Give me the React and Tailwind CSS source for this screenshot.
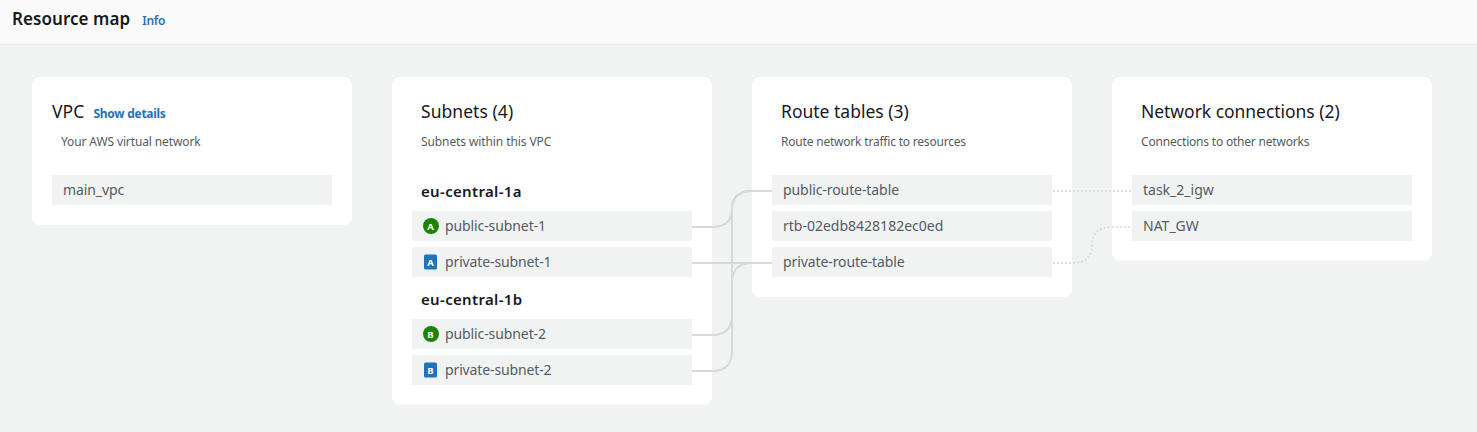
const columns = [
  {
    title: 'VPC', titleClass: 'tracking-[0.1px]', titlePad: '', action: 'Show details',
    subtitle: 'Your AWS virtual network', subtitleClass: 'tracking-[-0.12px]',
    rows: [{ label: 'main_vpc', tracking: 'tracking-[-0.1px]' }],
  },
  {
    title: 'Subnets (4)', titleClass: 'tracking-[0.05px]', titlePad: 'pl-[9px]',
    subtitle: 'Subnets within this VPC', subtitleClass: 'tracking-[-0.1px]',
    rows: [
      { zone: 'eu-central-1a' },
      { label: 'public-subnet-1', badge: 'A', open: true, tracking: 'tracking-[-0.1px]' },
      { label: 'private-subnet-1', badge: 'A', tracking: 'tracking-[-0.13px]' },
      { zone: 'eu-central-1b' },
      { label: 'public-subnet-2', badge: 'B', open: true, tracking: 'tracking-[-0.1px]' },
      { label: 'private-subnet-2', badge: 'B', tracking: 'tracking-[-0.13px]' },
    ],
  },
  {
    title: 'Route tables (3)', titlePad: 'pl-[9px]',
    subtitle: 'Route network traffic to resources', subtitleClass: 'tracking-[-0.2px]',
    rows: [
      { label: 'public-route-table', tracking: 'tracking-[-0.08px]' },
      { label: 'rtb-02edb8428182ec0ed' },
      { label: 'private-route-table', tracking: 'tracking-[-0.1px]' },
    ],
  },
  {
    title: 'Network connections (2)', titleClass: 'tracking-[-0.04px]', titlePad: 'pl-[9px]',
    subtitle: 'Connections to other networks', subtitleClass: 'tracking-[-0.2px]',
    rows: [{ label: 'task_2_igw' }, { label: 'NAT_GW' }],
  },
];

function Badge({ letter, open }) {
  return (
    <svg className="mr-[6px] h-4 w-4 shrink-0" viewBox="0 0 16 16">
      {open ? <circle cx="8" cy="8" r="8" fill="#1d8102" /> : <rect x="1" y="0.5" width="13" height="15" rx="1.5" fill="#1f73b9" />}
      <text x="7.5" y="11.5" textAnchor="middle" fontSize="9.5" fontWeight="700" fill="#fff">{letter}</text>
    </svg>
  );
}

function Row({ row }) {
  if (row.zone) {
    return <h3 className="flex h-[30px] items-center pl-[9px] pt-[2px] text-[15px] font-semibold tracking-[0.33px] text-[#16191f]">{row.zone}</h3>;
  }
  return (
    <div className="flex h-[30px] items-center rounded-[2px] bg-[#f1f3f3] pl-[11px] text-[14px] leading-5 text-[#545b64]">
      {row.badge && <Badge letter={row.badge} open={row.open} />}
      <span className={row.tracking}>{row.label}</span>
    </div>
  );
}

function Column({ column }) {
  return (
    <section className="w-[320px] shrink-0 rounded-[8px] bg-white p-5">
      <div className="h-[78px]">
        <h2 className={`flex h-[30px] items-baseline gap-[9px] text-[17.5px] leading-[28px] text-[#16191f] ${column.titlePad}`}>
          <span className={column.titleClass}>{column.title}</span>
          {column.action && <a className="text-[12px] font-bold tracking-[-0.27px] text-[#2a6ebb]">{column.action}</a>}
        </h2>
        <p className={`pl-[9px] pt-[5px] text-[12px] leading-5 text-[#545b64] ${column.subtitleClass || ''}`}>{column.subtitle}</p>
      </div>
      <div className="flex flex-col gap-[6px]">
        {column.rows.map((row) => <Row key={row.zone || row.label} row={row} />)}
      </div>
    </section>
  );
}

export default function App() {
  return (
    <div className="flex h-[432px] w-[1477px] flex-col overflow-hidden bg-[#f1f3f3] font-['Noto_Sans','Open_Sans',sans-serif]">
      <header className="flex h-[45px] shrink-0 items-baseline border-b border-[#eaeded] bg-[#fafafa] pl-3 pt-[5px]">
        <h1 className="text-[17px] font-semibold leading-7 tracking-[0.06px] text-[#16191f]">Resource map</h1>
        <a className="ml-3 text-[12px] font-semibold tracking-[-0.2px] text-[#2a6ebb]">Info</a>
      </header>
      <main className="relative flex flex-1 items-start gap-10 pl-8 pt-8">
        {columns.map((column) => <Column key={column.title} column={column} />)}
        <svg className="pointer-events-none absolute left-0 top-0" width="1477" height="387" viewBox="0 45 1477 387" fill="none" strokeWidth="2">
          <g stroke="#d5dbdb">
            <path d="M692 227H712Q732 227 732 209Q732 191 752 191H772" />
            <path d="M692 335H712Q732 335 732 315V211Q732 191 752 191H772" />
            <path d="M692 371H712Q732 371 732 351V283Q732 263 752 263H772" />
            <path d="M692 263H772" />
          </g>
          <g stroke="#dcdfdf" strokeDasharray="2 2" strokeDashoffset="-1">
            <path d="M1052 191H1132" />
            <path d="M1052 263H1072Q1092 263 1092 245Q1092 227 1112 227H1132" />
          </g>
        </svg>
      </main>
    </div>
  );
}
